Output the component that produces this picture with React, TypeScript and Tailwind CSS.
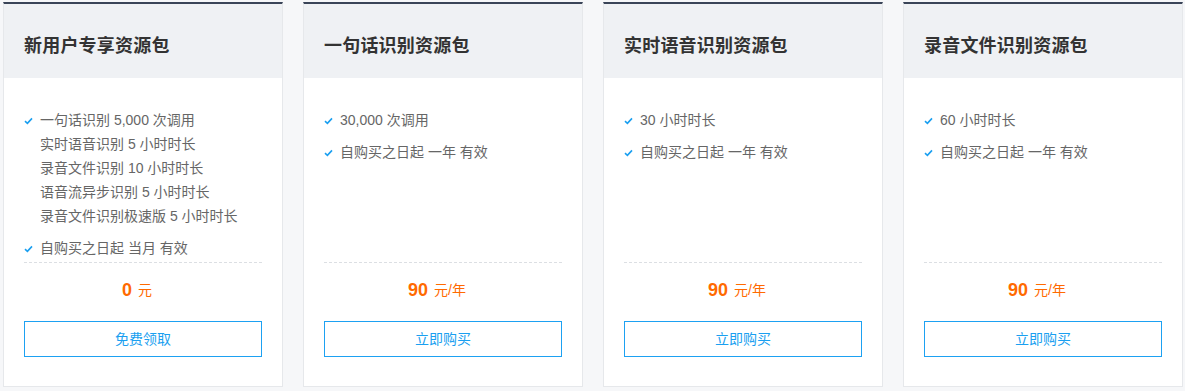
const packs = [
  {
    title: "新用户专享资源包",
    items: [
      ["一句话识别 5,000 次调用", "实时语音识别 5 小时时长", "录音文件识别 10 小时时长", "语音流异步识别 5 小时时长", "录音文件识别极速版 5 小时时长"],
      ["自购买之日起 当月 有效"],
    ],
    price: "0",
    unit: "元",
    action: "免费领取",
  },
  {
    title: "一句话识别资源包",
    items: [["30,000 次调用"], ["自购买之日起 一年 有效"]],
    price: "90",
    unit: "元/年",
    action: "立即购买",
  },
  {
    title: "实时语音识别资源包",
    items: [["30 小时时长"], ["自购买之日起 一年 有效"]],
    price: "90",
    unit: "元/年",
    action: "立即购买",
  },
  {
    title: "录音文件识别资源包",
    items: [["60 小时时长"], ["自购买之日起 一年 有效"]],
    price: "90",
    unit: "元/年",
    action: "立即购买",
  },
];

function Check() {
  return (
    <svg width="9" height="8" viewBox="0 0 9 8" className="shrink-0 mt-[9px] mr-[7px]">
      <path d="M1 4.2 L3.4 6.4 L8 1.4" fill="none" stroke="#1a9ff0" strokeWidth="1.6" />
    </svg>
  );
}

export default function App() {
  return (
    <div
      className="min-h-[391px] bg-[#f6f7f9] pt-[2px] pl-[3px] flex gap-5"
      style={{ fontFamily: '"Liberation Sans", "Noto Sans CJK SC", sans-serif' }}
    >
      {packs.map((p) => (
        <div
          key={p.title}
          className="w-[280px] h-[385px] bg-white border border-[#e6e8eb] border-t-2 border-t-[#3a4458] flex flex-col"
        >
          {/* 标题 */}
          <div className="h-[74px] bg-[#eff1f4] px-5 pt-[11px] flex items-center">
            <h3 className="text-[18px] font-bold text-[#333] tracking-[0.2px]">{p.title}</h3>
          </div>

          {/* 内容 */}
          <div className="px-5">
            <div className="h-[185px] pt-[30px] border-b border-dashed border-[#dcdfe3] flex flex-col gap-2">
              {p.items.map((group, gi) => (
                <div key={gi} className="flex">
                  <Check />
                  <div className="text-[14px] leading-6 text-[#666]">
                    {group.map((line) => (
                      <div key={line}>{line}</div>
                    ))}
                  </div>
                </div>
              ))}
            </div>

            <div className="h-[54px] flex items-center justify-center text-[#ff6a00] pt-[1px] pr-3">
              <span className="text-[18px] font-bold">{p.price}</span>
              <span className="text-[14px] ml-[6px]">{p.unit}</span>
            </div>

            <button className="w-full h-9 mt-[4px] border border-[#1da1f2] text-[14px] text-[#1a9ff0] bg-white">
              {p.action}
            </button>
          </div>
        </div>
      ))}
    </div>
  );
}
